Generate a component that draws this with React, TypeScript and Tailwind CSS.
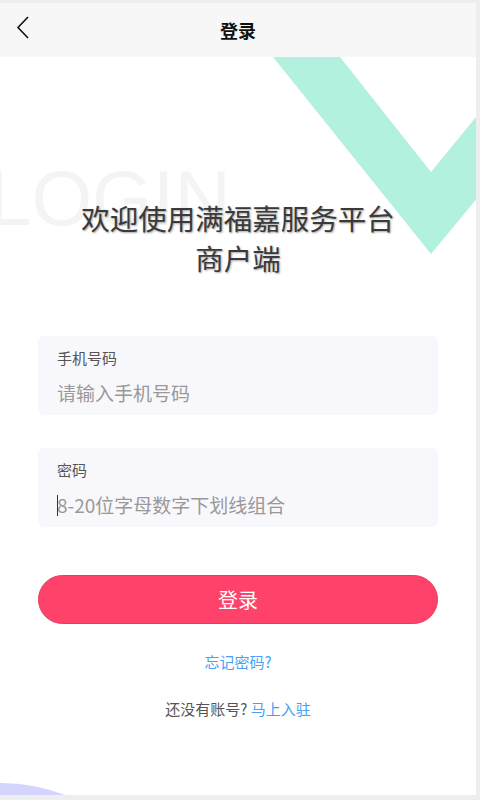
import React from "react";

const CJK = '"Noto Sans CJK SC", "Noto Sans", sans-serif';

export default function App() {
  return (
    <div
      className="w-[480px] h-[800px] bg-[#eeeeee] pt-[3px] pr-[4px] pb-[5px]"
      style={{ fontFamily: CJK }}
    >
      <div className="relative w-[476px] h-[792px] bg-white overflow-hidden">
        {/* decorations */}
        <svg
          className="absolute left-0 top-0 z-0"
          width="476"
          height="300"
          viewBox="0 0 476 300"
        >
          <polygon
            points="273,54 340,54 431,169 520,60 520,143 431,251"
            fill="#b2f0df"
          />
        </svg>
        <div
          className="absolute left-[-12px] top-[156px] z-0 text-[78px] leading-none text-[#f4f4f4] select-none"
          style={{ fontFamily: '"Liberation Sans", sans-serif', fontWeight: 300 }}
        >
          LOGIN
        </div>
        <div className="absolute left-[-182px] top-[780px] w-[364px] h-[364px] rounded-full bg-[#d4d4ff] z-0" />

        {/* header */}
        <div className="relative z-10 h-[54px] bg-[#f7f7f7] flex items-center justify-center">
          <svg
            className="absolute left-[14px] top-[11px]"
            width="18"
            height="26"
            viewBox="0 0 18 26"
          >
            <polyline
              points="14,3 4,13.5 14,24"
              fill="none"
              stroke="#111"
              strokeWidth="1.6"
            />
          </svg>
          <span className="text-[18px] font-bold text-[#111] leading-[24px]">登录</span>
        </div>

        {/* content */}
        <div className="relative z-10 flex flex-col items-center">
          <div
            className="mt-[141px] text-[28.5px] leading-[40px] text-[#3a3a3a] text-center"
            style={{ textShadow: "1px 1px 2px rgba(0,0,0,0.35)" }}
          >
            欢迎使用满福嘉服务平台
            <br />
            商户端
          </div>

          <div className="mt-[58px] w-[400px] h-[79px] rounded-[6px] bg-[#f8f7fb] px-[19px] pt-[12px] flex flex-col gap-[12px]">
            <div className="text-[15px] leading-[20px] text-[#555]">手机号码</div>
            <div className="text-[19px] leading-[26px] text-[#999]">请输入手机号码</div>
          </div>

          <div className="mt-[33px] w-[400px] h-[79px] rounded-[6px] bg-[#f8f7fb] px-[19px] pt-[12px] flex flex-col gap-[12px]">
            <div className="text-[15px] leading-[20px] text-[#555]">密码</div>
            <div className="relative text-[19px] leading-[26px] text-[#999]">
              <span className="absolute left-0 top-[3px] w-[1px] h-[21px] bg-[#333]" />
              8-20位字母数字下划线组合
            </div>
          </div>

          <button className="mt-[48px] w-[400px] h-[49px] rounded-full bg-[#fe4269] border border-[#e83a5e] text-white text-[20px] leading-[28px] flex items-center justify-center">
            登录
          </button>

          <div className="mt-[28px] text-[15px] leading-[20px] text-[#4a9ff5]">忘记密码?</div>

          <div className="mt-[27px] text-[15px] leading-[20px] text-[#555]">
            还没有账号? <span className="text-[#4a9ff5]">马上入驻</span>
          </div>
        </div>
      </div>
    </div>
  );
}
